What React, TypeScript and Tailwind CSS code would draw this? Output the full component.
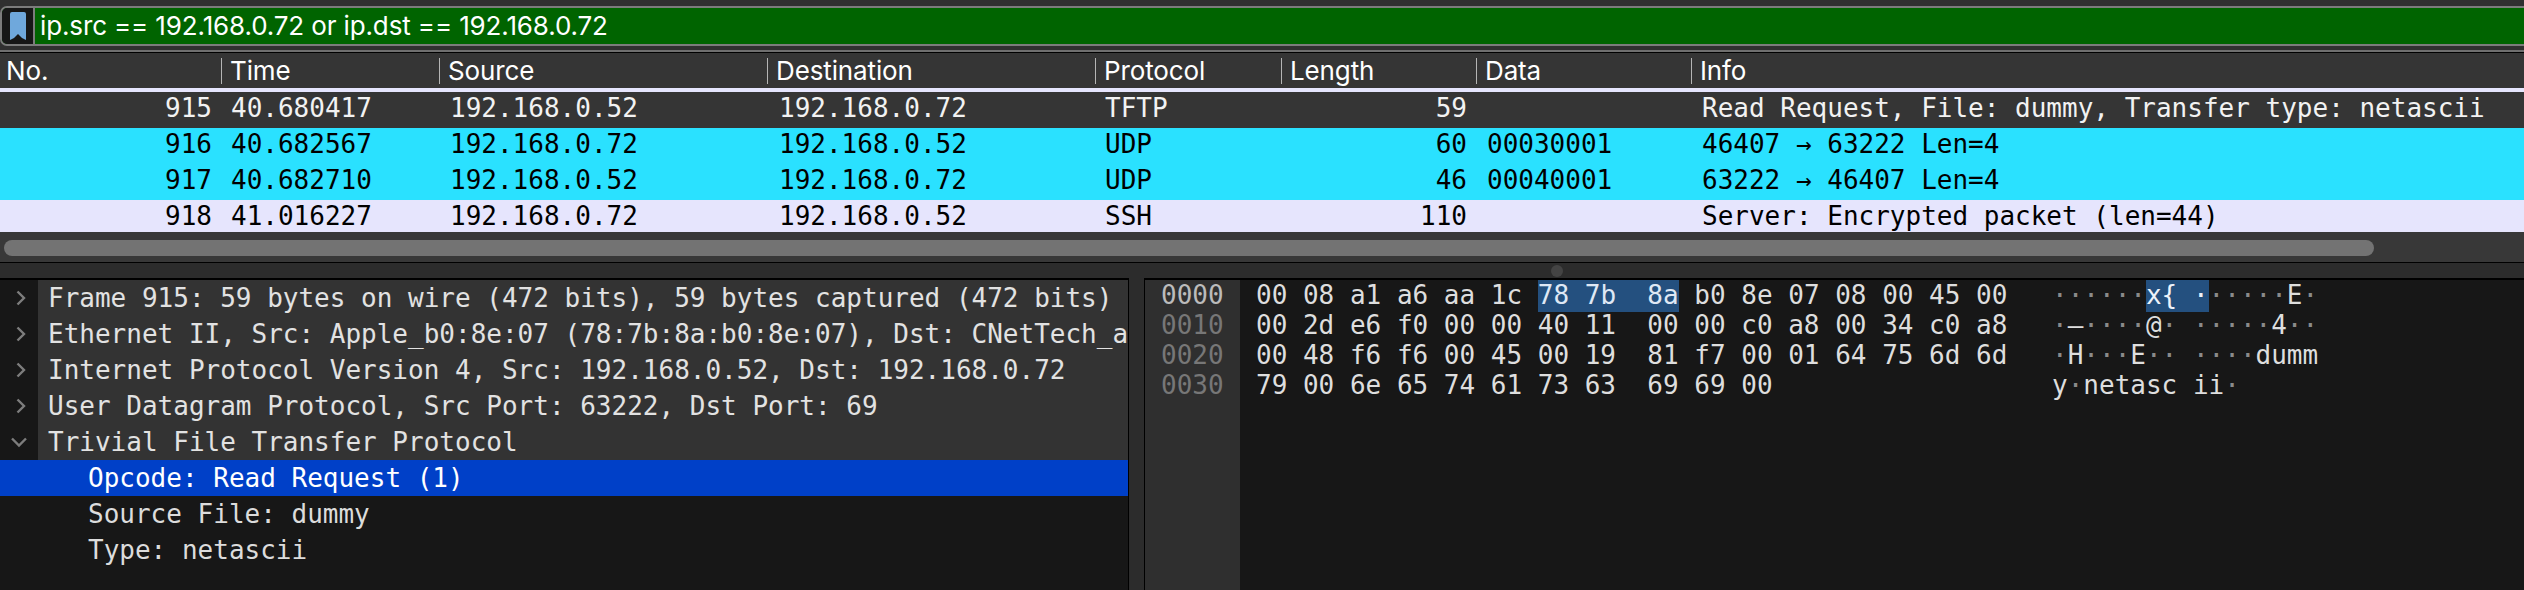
const mono = "font-['DejaVu_Sans_Mono','Liberation_Mono',monospace]";
const sans = "font-['Inter',sans-serif] tracking-[-0.13px]";

const columns = ['No.', 'Time', 'Source', 'Destination', 'Protocol', 'Length', 'Data', 'Info'];
const gridCols = 'grid grid-cols-[221px_218px_328px_328px_186px_195px_215px_1fr]';

const packets = [
  { no: '915', time: '40.680417', src: '192.168.0.52', dst: '192.168.0.72', proto: 'TFTP', len: '59', data: '', info: 'Read Request, File: dummy, Transfer type: netascii', row: 'h-[36px] bg-[#353535] text-[#f2f2f2]' },
  { no: '916', time: '40.682567', src: '192.168.0.72', dst: '192.168.0.52', proto: 'UDP', len: '60', data: '00030001', info: '46407 → 63222 Len=4', row: 'h-[36px] bg-[#2ae1ff] text-black' },
  { no: '917', time: '40.682710', src: '192.168.0.52', dst: '192.168.0.72', proto: 'UDP', len: '46', data: '00040001', info: '63222 → 46407 Len=4', row: 'h-[36px] bg-[#2ae1ff] text-black' },
  { no: '918', time: '41.016227', src: '192.168.0.72', dst: '192.168.0.52', proto: 'SSH', len: '110', data: '', info: 'Server: Encrypted packet (len=44)', row: 'h-[32px] bg-[#e6e5fd] text-black' },
];

const tree = [
  'Frame 915: 59 bytes on wire (472 bits), 59 bytes captured (472 bits)',
  'Ethernet II, Src: Apple_b0:8e:07 (78:7b:8a:b0:8e:07), Dst: CNetTech_a',
  'Internet Protocol Version 4, Src: 192.168.0.52, Dst: 192.168.0.72',
  'User Datagram Protocol, Src Port: 63222, Dst Port: 69',
];

function Chevron({ open }: { open?: boolean }) {
  return (
    <svg width="20" height="20" viewBox="0 0 20 20" fill="none" stroke="#7d7d7d" strokeWidth="2.4">
      {open ? <path d="M3 6.500l7 7 7-7" /> : <path d="M8.500 3.500l6.500 6.500-6.500 6.500" />}
    </svg>
  );
}

// the unprintable bytes are dim dots in the ascii column
function Ascii({ text }: { text: string }) {
  return (
    <>
      {text.split('').map((ch, i) =>
        ch === '·' ? <span key={i} className="text-[#8a8a8a]">{ch}</span> : <span key={i}>{ch}</span>
      )}
    </>
  );
}

export default function App() {
  return (
    <div className="w-[2524px] h-[590px] overflow-hidden bg-[#2c2c2c] flex flex-col">
      {/* filter bar */}
      <div className="pt-[6px] h-[50px] bg-[#303030] shrink-0">
        <div className="h-[40px] flex border-y-2 border-l-2 rounded-l-[7px] border-[#7c7c7c] bg-[#006400]">
          <div className="w-[33px] bg-[#171717] border-r-2 border-[#7c7c7c] rounded-l-[5px] flex items-center justify-center shrink-0">
            <svg width="16" height="28" viewBox="0 0 16 28">
              <path d="M0 2a2 2 0 0 1 2-2h12a2 2 0 0 1 2 2v26l-4-2-4-4-4 4-4 2z" fill="#6fa8dc" />
            </svg>
          </div>
          <div className={`pl-[5px] leading-[36px] text-[26px] text-white ${sans}`}>ip.src == 192.168.0.72 or ip.dst == 192.168.0.72</div>
        </div>
      </div>

      {/* packet list */}
      <div className="h-[2px] bg-[#6f6f6f] shrink-0" />
      <div className={`${gridCols} h-[36px] bg-[#353535] border-t border-black items-center shrink-0`}>
        {columns.map((c, i) => (
          <div key={c} className={`h-[26px] leading-[26px] text-[26px] text-white ${sans} ${i > 0 ? 'border-l border-[#b5b5b5] pl-[8px]' : 'pl-[6px]'}`}>{c}</div>
        ))}
      </div>
      <div className="h-[4px] bg-[#e6e5fd] shrink-0" />
      {packets.map((p) => (
        <div key={p.no} className={`${gridCols} shrink-0 text-[26px] leading-[32px] whitespace-pre overflow-hidden ${mono} ${p.row}`}>
          <div className="text-right pr-[9px]">{p.no}</div>
          <div className="pl-[10px]">{p.time}</div>
          <div className="pl-[11px]">{p.src}</div>
          <div className="pl-[12px]">{p.dst}</div>
          <div className="pl-[10px]">{p.proto}</div>
          <div className="text-right pr-[9px]">{p.len}</div>
          <div className="pl-[11px]">{p.data}</div>
          <div className="pl-[11px]">{p.info}</div>
        </div>
      ))}
      <div className="h-[30px] bg-[#383838] px-[4px] py-[8px] shrink-0">
        <div className="w-[2370px] h-[16px] rounded-full bg-[#737373]" />
      </div>

      {/* splitter */}
      <div className="h-[16px] bg-[#2c2c2c] border-t border-black flex items-center shrink-0">
        <div className="w-[12px] h-[12px] ml-[1551px] rounded-full bg-[#444444]" />
      </div>

      <div className="flex-1 flex min-h-0">
        {/* packet details */}
        <div className={`w-[1129px] shrink-0 bg-[#171717] border-t-2 border-r border-black text-[26px] leading-[36px] whitespace-pre overflow-hidden ${mono}`}>
          {tree.map((t) => (
            <div key={t} className="flex h-[36px]">
              <div className="w-[38px] flex items-center justify-center shrink-0"><Chevron /></div>
              <div className="flex-1 min-w-0 bg-[#333333] pl-[10px] text-[#e2e2e2]">{t}</div>
            </div>
          ))}
          <div className="flex h-[36px]">
            <div className="w-[38px] flex items-center justify-center shrink-0"><Chevron open /></div>
            <div className="flex-1 bg-[#333333] pl-[10px] text-[#e2e2e2]">Trivial File Transfer Protocol</div>
          </div>
          <div className="h-[36px] bg-[#0040c8] pl-[88px] text-white">Opcode: Read Request (1)</div>
          <div className="h-[36px] pl-[88px] text-[#dcdcdc]">Source File: dummy</div>
          <div className="h-[36px] pl-[88px] text-[#dcdcdc]">Type: netascii</div>
        </div>

        <div className="w-[15px] shrink-0" />

        {/* packet bytes */}
        <div className={`flex-1 flex bg-[#171717] border-t-2 border-l border-black text-[26px] leading-[30px] whitespace-pre ${mono}`}>
          <div className="w-[95px] bg-[#2f2f2f] pl-[16px] text-[#777777]">
            <div className="text-[#bbbbbb]">0000</div>
            <div>0010</div>
            <div>0020</div>
            <div>0030</div>
          </div>
          <div className="pl-[16px] w-[812px] text-[#dedede]">
            <div>00 08 a1 a6 aa 1c <span className="bg-[#24507f] pb-[2px] text-[#dfe8f5]">78 7b  8a</span> b0 8e 07 08 00 45 00</div>
            <div>00 2d e6 f0 00 00 40 11  00 00 c0 a8 00 34 c0 a8</div>
            <div>00 48 f6 f6 00 45 00 19  81 f7 00 01 64 75 6d 6d</div>
            <div>79 00 6e 65 74 61 73 63  69 69 00</div>
          </div>
          <div className="text-[#dedede]">
            <div><Ascii text="······" /><span className="bg-[#24507f] pb-[2px] text-[#eef3fa]">{'x{ ·'}</span><Ascii text="·····E·" /></div>
            <div><Ascii text="·–····@· ·····4··" /></div>
            <div><Ascii text="·H···E·· ····dumm" /></div>
            <div><Ascii text="y·netasc ii·" /></div>
          </div>
        </div>
      </div>
    </div>
  );
}
